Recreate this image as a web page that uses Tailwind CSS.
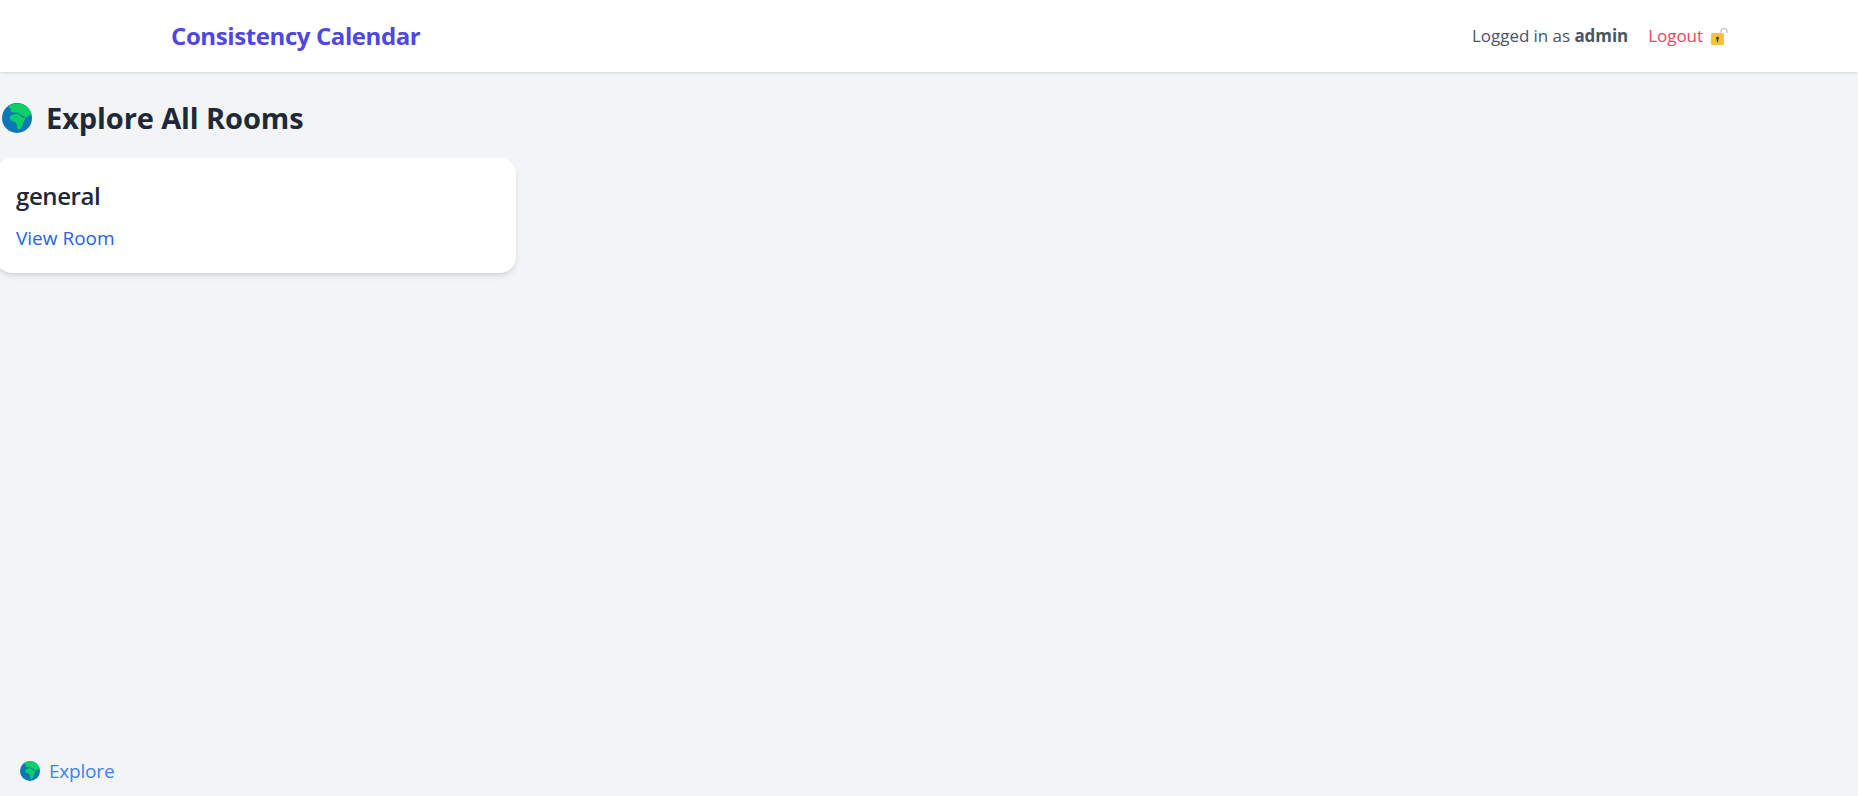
<!DOCTYPE html>
<html>
<head>
    <meta charset="UTF-8"/>
    <title>Consistency Calendar</title>
    <script src="https://cdn.jsdelivr.net/npm/@tailwindcss/browser@4"></script>
</head>
<body class="bg-[#f3f4f6] font-['Open_Sans',sans-serif] h-[796px] overflow-hidden flex flex-col">
    <nav class="bg-white shadow h-[72px] flex items-center justify-between pl-[171px] pr-[130px]">
        <a class="text-[24px] font-bold text-[#4f46e5] tracking-[-0.4px]">Consistency Calendar</a>
        <div class="flex items-center gap-[20px] text-[17px] tracking-[-0.05px]">
            <span class="text-[#4b5563]">Logged in as <b class="font-bold">admin</b></span>
            <a class="text-[#f43f5e] flex items-center gap-[7px]">Logout
                <svg width="18" height="18" viewBox="0 0 18 18">
                    <path d="M11 8V4.5a3 3 0 0 1 6 0V6" fill="none" stroke="#c9ccd1" stroke-width="1.5"/>
                    <rect x="1" y="6" width="13" height="12" rx="1.5" fill="#fdbf3f"/>
                    <circle cx="7.5" cy="11" r="1.5" fill="#3b3f46"/>
                    <rect x="6.8" y="11" width="1.4" height="4" fill="#3b3f46"/>
                </svg>
            </a>
        </div>
    </nav>
    <main class="flex-1 pt-[28px]">
        <h1 class="flex items-center gap-[14px] pl-[2px] text-[29px] leading-[36px] font-bold text-[#1f2937] tracking-[-0.1px]">
            <svg width="30" height="30" viewBox="0 0 30 30">
                <circle cx="15" cy="15" r="15" fill="#0a78b8"/>
                <path d="M7 2.5C12 -0.3 19 -0.3 23.5 2.5C27 5 29.3 8.5 29.9 13L26.7 11.5L26 15L24 13.5L23.5 15.5L21 12.5L18 11L15 9.5L11 9.5L8 8L10 6L7 5Z" fill="#0ccf67"/>
                <path d="M9.5 12L15 10.5L18 12.5L21 14.5L23.5 15.5L21.5 19.5L20 24L17.5 26.5L15.5 26L14.5 20.5L12.5 18.5L9 17.5L7.5 14.5Z" fill="#0ccf67"/>
            </svg>
            Explore All Rooms
        </h1>
        <div class="mt-[22px] -ml-[4px] w-[520px] h-[115px] bg-white rounded-2xl shadow-md pl-[20px] pr-4 pt-[22px]">
            <h2 class="text-[24px] leading-[32px] font-semibold text-[#1f2937] tracking-[-0.4px]">general</h2>
            <a class="block mt-[12px] text-[19px] leading-[28px] text-[#2563eb]">View Room</a>
        </div>
    </main>
    <footer class="flex items-center gap-[9px] pl-[20px] pb-[11px] text-[19px] leading-[28px] text-[#3b82f6] tracking-[-0.2px]">
        <svg width="20" height="20" viewBox="0 0 30 30">
            <circle cx="15" cy="15" r="15" fill="#0a78b8"/>
            <path d="M7 2.5C12 -0.3 19 -0.3 23.5 2.5C27 5 29.3 8.5 29.9 13L26.7 11.5L26 15L24 13.5L23.5 15.5L21 12.5L18 11L15 9.5L11 9.5L8 8L10 6L7 5Z" fill="#0ccf67"/>
            <path d="M9.5 12L15 10.5L18 12.5L21 14.5L23.5 15.5L21.5 19.5L20 24L17.5 26.5L15.5 26L14.5 20.5L12.5 18.5L9 17.5L7.5 14.5Z" fill="#0ccf67"/>
        </svg>
        Explore
    </footer>
</body>
</html>
